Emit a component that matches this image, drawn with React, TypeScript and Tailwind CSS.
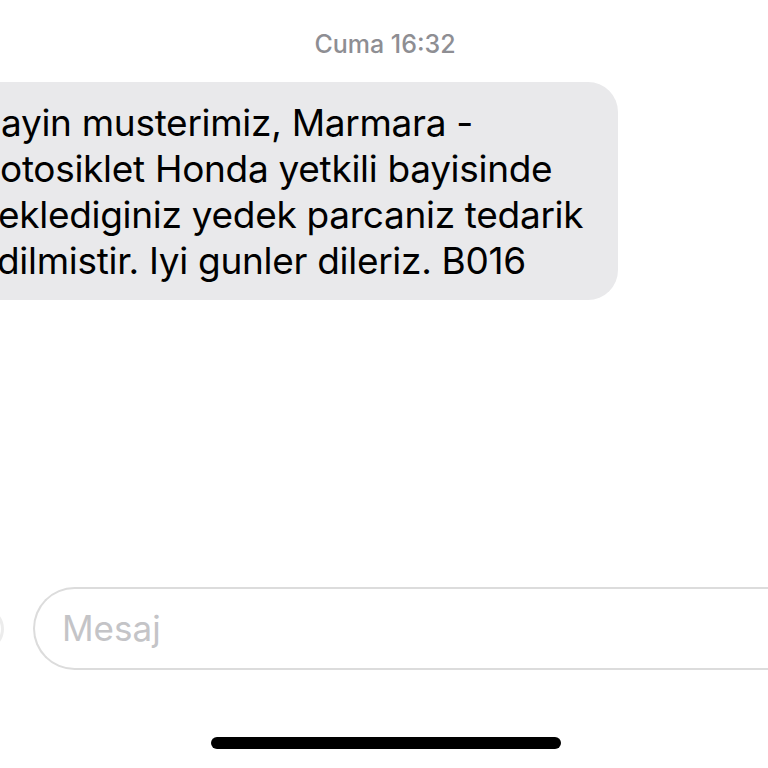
const LINES: { text: string; shift: string }[] = [
  { text: "ayin musterimiz, Marmara -", shift: "ml-[1px]" },
  { text: "otosiklet Honda yetkili bayisinde", shift: "ml-0" },
  { text: "eklediginiz yedek parcaniz tedarik", shift: "-ml-[2px]" },
  { text: "dilmistir. Iyi gunler dileriz. B016", shift: "-ml-[3px]" },
];

// Message bubble is cut off by the left screen edge, so lines start mid-word.
function IncomingBubble() {
  return (
    <div className="w-[618px] rounded-r-[30px] bg-[#e9e9eb] pt-[18px] pb-[16px] text-[37px] leading-[46px] tracking-[-0.3px] text-black">
      {LINES.map((line) => (
        <div key={line.text} className={`whitespace-nowrap ${line.shift}`}>
          {line.text}
        </div>
      ))}
    </div>
  );
}

function Composer() {
  return (
    <div className="flex items-center">
      <div className="-ml-[40px] mr-[29px] h-[44px] w-[44px] shrink-0 rounded-full border-[3px] border-[#ececec]" />
      <div className="flex h-[83px] w-[760px] shrink-0 items-center rounded-l-full border-2 border-r-0 border-[#dcdcdc] pl-[27px]">
        <span className="text-[35px] text-[#c4c4c7]">Mesaj</span>
      </div>
    </div>
  );
}

export default function App() {
  return (
    <div
      className="flex h-[768px] w-[768px] flex-col overflow-hidden bg-white"
      style={{ fontFamily: "Inter, Roboto, 'Liberation Sans', sans-serif" }}
    >
      <div className="pt-[30px] text-center text-[25px] font-medium leading-[29px] text-[#8e8e93]">
        <span className="ml-[2px]">Cuma 16:32</span>
      </div>
      <div className="mt-[23px]">
        <IncomingBubble />
      </div>
      <div className="mt-[287px]">
        <Composer />
      </div>
      <div className="mt-[67px] flex justify-center">
        <div className="ml-[3px] h-[12px] w-[350px] rounded-full bg-black" />
      </div>
    </div>
  );
}
